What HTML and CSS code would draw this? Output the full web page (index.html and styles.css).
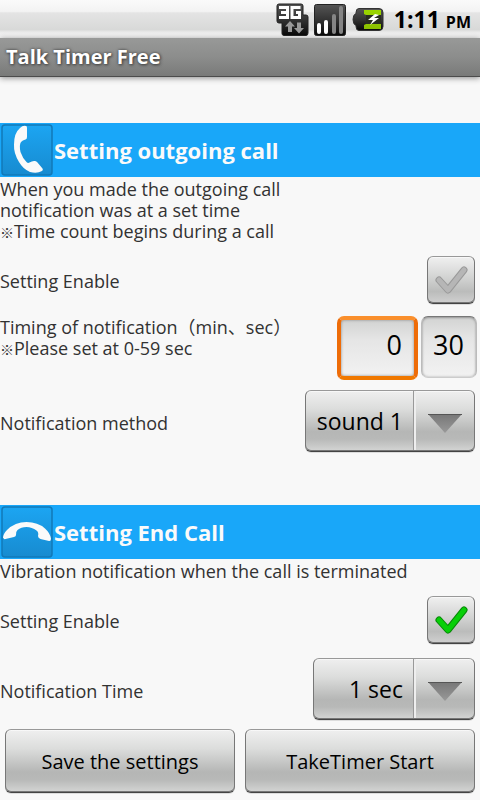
FILE: index.html
```html
<!DOCTYPE html>
<html lang="en">
<head>
<meta charset="utf-8">
<meta name="viewport" content="width=device-width, initial-scale=1">
<title>Talk Timer Free</title>
<link rel="stylesheet" href="styles.css">
</head>
<body>
<div class="status">
  <svg class="status-icons" width="110" height="34" viewBox="0 0 110 34" aria-hidden="true">
    <defs>
      <linearGradient id="dark" x1="0" y1="0" x2="0" y2="1"><stop offset="0" stop-color="#555"/><stop offset=".5" stop-color="#333"/><stop offset="1" stop-color="#080808"/></linearGradient>
      <linearGradient id="lime" x1="0" y1="0" x2="0" y2="1"><stop offset="0" stop-color="#9bd600"/><stop offset="1" stop-color="#8abf00"/></linearGradient>
    </defs>
    <path d="M3 2h22q2 0 2 2v9h3q2 0 2 2v16q0 2.500-2 2.500H8q-2 0-2-2V21H3q-2 0-2-2V4q0-2 2-2z" fill="url(#dark)" stroke="#222"/>
    <path d="M3 5.500h8.500v10H3M5 10.500h6M24.500 5.500H16v10h7.500v-5H20" fill="none" stroke="#fff" stroke-width="3"/>
    <path d="M14 19l5 5.500h-3V30h-4v-5.500H9zM23 31.500l-5-5.500h3v-5.500h4V26h3z" fill="#999"/>
    <rect x="38.500" y="2.500" width="31" height="31" rx="2" fill="url(#dark)" stroke="#222"/>
    <g stroke-width="4" stroke-linecap="round"><path d="M43 23v7M50 20v10" stroke="#fff"/><path d="M58 14v16M65 6v24" stroke="#858585"/></g>
    <path d="M83 6.500h20q4 0 4 4v14q0 4-4 4H83q-3 0-3-4v-1q-3-1-3-6t3-6v-1q0-4 3-4z" fill="url(#dark)" stroke="#333"/>
    <path d="M88 8h17v19H88v-4l2-1v-9l-2-1z" fill="url(#lime)"/>
    <path d="M90 13h15v9H90z" fill="#292d20"/>
    <path d="M99 12l-7 6h5l-3 5 9-7h-5l5-3z" fill="#fff"/>
  </svg>
  <span class="clock">1:11 <small>PM</small></span>
</div>
<header class="titlebar"><h1>Talk Timer Free</h1></header>
<main>
  <section class="group">
    <div class="group-head">
      <svg width="54" height="54" viewBox="0 0 54 54" aria-hidden="true">
        <defs><linearGradient id="tile" x1="0" y1="0" x2="0" y2="1"><stop offset="0" stop-color="#1ca5f2"/><stop offset="1" stop-color="#178bd0"/></linearGradient></defs>
        <rect x="2" y="2" width="50" height="50" rx="3" fill="url(#tile)" stroke="#1279b8" stroke-width="1.500"/>
        <path d="M20 5q3-3 6-2 1 0 1 2v9q0 2-1.500 2.500-3 .5-4.500 2.500-2 3-.5 10 2 6 6 10 1.500 1.500 3 .5 3-2 5.500-1.500 1.500 0 2.500 1.500l5 6q1 1.500-.5 2.500-5 3-12 1-7-3-11-10-5.500-9-5-17.500Q14 10 20 5z" fill="#fafafa"/>
      </svg>
      <h2>Setting outgoing call</h2>
    </div>
    <p class="note">When you made the outgoing call<br>notification was at a set time<br><span class="mark">※</span>Time count begins during a call</p>
    <div class="row row-check">
      <label for="out-on">Setting Enable</label>
      <span class="check"><input type="checkbox" id="out-on"><svg class="tick" viewBox="0 0 48 48" aria-hidden="true"><path class="tick-edge" d="M12 24l9 10 16-20"/><path class="tick-fill" d="M12 24l9 10 16-20"/></svg></span>
    </div>
    <div class="row row-time">
      <label for="min">Timing of notification（min、sec）<br><span class="mark">※</span>Please set at 0-59 sec</label>
      <span class="fields"><input class="field field-min" id="min" type="text" inputmode="numeric" value="0"><input class="field field-sec" type="text" inputmode="numeric" value="30" aria-label="Seconds"></span>
    </div>
    <div class="row row-select">
      <label for="method">Notification method</label>
      <span class="spinner spinner-method"><select id="method"><option>sound 1</option></select><svg class="arrow" width="34" height="20" viewBox="0 0 34 20" aria-hidden="true"><defs><linearGradient id="tri" x1="0" y1="0" x2="0" y2="1"><stop offset="0" stop-color="#777"/><stop offset="1" stop-color="#999"/></linearGradient></defs><path d="M0 0h34L17 19z" fill="url(#tri)"/><path d="M0 .5h34" stroke="#555"/></svg></span>
    </div>
  </section>
  <section class="group">
    <div class="group-head">
      <svg width="54" height="54" viewBox="0 0 54 54" aria-hidden="true">
        <rect x="2" y="2" width="50" height="50" rx="3" fill="url(#tile)" stroke="#1279b8" stroke-width="1.500"/>
        <path d="M3 33q0-4 4-8 8-8 19.500-8T45 23.500q5 4.500 6 10 0 3-2 2.500l-8.500-2q-2.500-1-2.500-3 1-4-1.500-5.500-4.500-3.500-10-3.500t-9 3q-2 2-1.500 5 0 1.500-2 2l-8.500 2q-2 .5-2-1z" fill="#fafafa"/>
      </svg>
      <h2>Setting End Call</h2>
    </div>
    <p class="note">Vibration notification when the call is terminated</p>
    <div class="row row-check">
      <label for="end-on">Setting Enable</label>
      <span class="check"><input type="checkbox" id="end-on" checked><svg class="tick" viewBox="0 0 48 48" aria-hidden="true"><path class="tick-edge" d="M12 24l9 10 16-20"/><path class="tick-fill" d="M12 24l9 10 16-20"/></svg></span>
    </div>
    <div class="row row-select">
      <label for="time">Notification Time</label>
      <span class="spinner spinner-time"><select id="time"><option>1 sec</option></select><svg class="arrow" width="34" height="20" viewBox="0 0 34 20" aria-hidden="true"><path d="M0 0h34L17 19z" fill="url(#tri)"/><path d="M0 .5h34" stroke="#555"/></svg></span>
    </div>
  </section>
  <div class="actions">
    <button type="button">Save the settings</button>
    <button type="button">TakeTimer Start</button>
  </div>
</main>
</body>
</html>
```
FILE: styles.css
```css
* { box-sizing: border-box; }

body {
  margin: 0;
  background: #f8f8f8;
  color: #323232;
  font-family: "Open Sans", "Noto Sans CJK JP", sans-serif;
  font-size: 18px;
  line-height: 21px;
}

h1, h2, p { margin: 0; }

.status {
  display: flex;
  justify-content: flex-end;
  align-items: center;
  gap: 8px;
  height: 38px;
  padding-right: 9px;
  background: linear-gradient(#fafafa, #f3f3f3 30%, #e4e4e4 34%, #d8d9d8 78%, #eee 86%, #f8f8f8);
}

.clock {
  color: #000;
  font-size: 23px;
  font-weight: 700;
  line-height: 38px;
  padding-top: 2px;
}

.clock small { font-size: 16px; }

.titlebar {
  height: 39px;
  padding-left: 6px;
  border-bottom: 1px solid #4c4c4c;
  background: linear-gradient(#989998, #8c8d8c 50%, #797a79);
  box-shadow: 0 1px 6px #888;
}

.titlebar h1 {
  color: #fff;
  font-size: 20px;
  line-height: 37px;
  text-shadow: 0 0 3px #444, 1px 1px 3px #444;
}

main { padding-top: 46px; }

.group + .group { margin-top: 53px; }

.group-head {
  display: flex;
  align-items: center;
  background: #19a7f9;
  color: #fafafa;
}

.group-head h2 {
  font-size: 22px;
  line-height: 54px;
}

.note { padding-top: 2px; }

.mark {
  font-size: 14px;
  line-height: 1;
}

.row {
  display: flex;
  justify-content: space-between;
  align-items: center;
  padding-right: 5px;
}

.row-check { margin-top: 14px; }

.row-time {
  align-items: flex-start;
  margin-top: 12px;
  padding-right: 3px;
}

.row-select { margin-top: 10px; }
.row-check + .row-select { margin-top: 14px; }
.row-select label { padding-top: 5px; }
.row-check label { padding-top: 2px; }
.row-time label { padding-top: 1px; }

.check {
  position: relative;
  display: block;
  width: 48px;
  height: 48px;
}

.check input,
.spinner select,
.actions button {
  appearance: none;
  margin: 0;
  border: 1px solid;
  border-color: #999 #777 #444;
  border-radius: 6px;
  background: linear-gradient(#efefef, #dcdddc 30%, #b5b6b5 68%, #b8b9b8 80%, #d4d5d4);
  box-shadow: inset 0 -1px #777, inset 0 1px #fff8, 0 1px #ddd;
  color: #000;
  font-family: inherit;
}

.check input {
  display: block;
  width: 100%;
  height: 100%;
  background: linear-gradient(#f0f0f0, #d2d3d2 45%, #bbbcbb 75%, #d0d0d0);
}

.tick {
  position: absolute;
  inset: 0;
  fill: none;
  stroke-linecap: round;
  stroke-linejoin: round;
  pointer-events: none;
}

.tick-edge { stroke: #999; stroke-width: 7; }
.tick-fill { stroke: #b6b6b6; stroke-width: 5; }
input:checked + .tick .tick-edge { stroke: #088808; }
input:checked + .tick .tick-fill { stroke: #08cf08; }

.fields {
  display: flex;
  gap: 3px;
}

.field {
  height: 62px;
  border: 1px solid;
  border-color: #777 #bbb #ccc;
  border-radius: 7px;
  background: linear-gradient(#d2d3d2, #e5e5e5 35%, #f2f2f2);
  box-shadow: inset 0 1px 2px #999, inset 0 0 3px #bbb;
  color: #000;
  font-family: inherit;
  font-size: 27px;
  line-height: 32px;
  text-align: right;
  outline: 0;
}

.field-sec {
  width: 56px;
  padding: 0 12px 6px 0;
}

.field-min {
  width: 81px;
  height: 64px;
  padding: 0 12px 8px 0;
  border: 4px solid;
  border-color: #fa8f2c #ee6c08 #f07800;
  box-shadow: inset 0 0 3px #888;
}

.spinner {
  position: relative;
  display: block;
}

.spinner select {
  display: block;
  width: 100%;
  height: 62px;
  padding: 0 71px 0 0;
  font-size: 23px;
  text-align: right;
  text-align-last: right;
}

.spinner-method { width: 170px; }
.spinner-time { width: 162px; }

.spinner::after {
  content: "";
  position: absolute;
  top: 1px;
  right: 59px;
  bottom: 2px;
  width: 2px;
  border-left: 1px solid #999;
  background: #eee;
}

.arrow {
  position: absolute;
  top: 24px;
  right: 13px;
  pointer-events: none;
}

.actions {
  display: grid;
  grid-template-columns: 1fr 1fr;
  gap: 10px;
  padding: 9px 5px 6px;
}

.actions button {
  height: 64px;
  padding: 0;
  font-size: 20px;
}
```
